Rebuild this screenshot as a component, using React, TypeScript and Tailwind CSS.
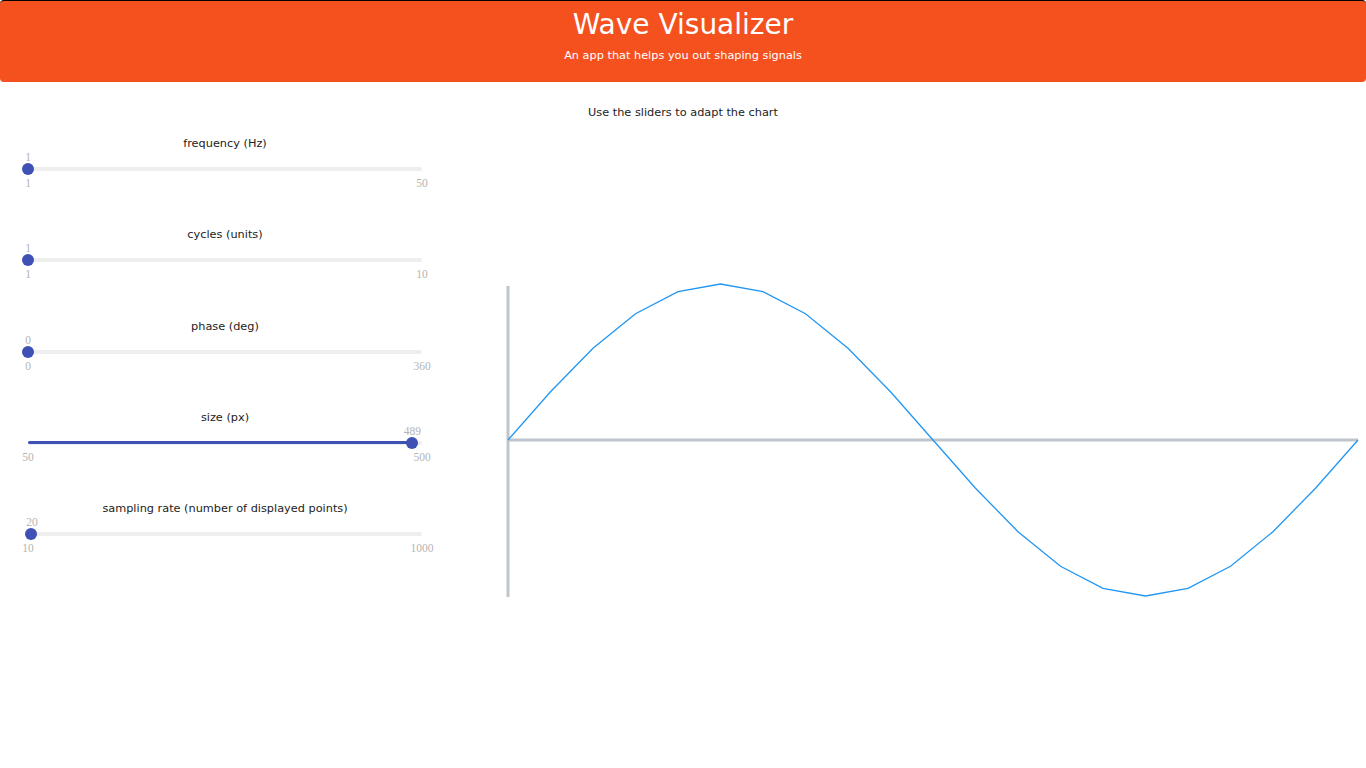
import React from "react";

type SliderProps = {
  label: string;
  value: number;
  min: number;
  max: number;
  filled?: boolean;
};

const TRACK = 394;

function Slider({ label, value, min, max, filled }: SliderProps) {
  const pos = ((value - min) / (max - min)) * TRACK;
  return (
    <div className="w-[394px]">
      <div className="text-center text-[11.3px] leading-[14px] text-[#222]">{label}</div>
      <div className="relative h-[12px]">
        <span
          className="absolute top-0 -translate-x-1/2 text-[11.5px] leading-[12px] text-[#b4b4b4] [font-family:'Liberation_Serif',serif]"
          style={{ left: pos }}
        >
          {value}
        </span>
      </div>
      <div className="relative h-[12px]">
        <div className="absolute left-0 right-0 top-[4px] h-[4px] rounded-full bg-[#eeeeee]" />
        {filled && (
          <div
            className="absolute left-0 top-[4.5px] h-[3px] rounded-full bg-[#3f51b5]"
            style={{ width: pos }}
          />
        )}
        <div
          className="absolute top-0 h-[12px] w-[12px] -translate-x-1/2 rounded-full bg-[#3f51b5]"
          style={{ left: pos - 0.5 }}
        />
      </div>
      <div className="relative mt-[2px] h-[12px] text-[11.5px] leading-[12px] text-[#b4b4b4] [font-family:'Liberation_Serif',serif]">
        <span className="absolute left-0 top-0 -translate-x-1/2">{min}</span>
        <span className="absolute top-0 right-0 translate-x-1/2">{max}</span>
      </div>
    </div>
  );
}

function Chart() {
  const n = 20;
  const pts: string[] = [];
  for (let i = 0; i <= n; i++) {
    const x = 2 + 42.5 * i;
    const y = 156 - 156 * Math.sin((2 * Math.PI * i) / n);
    pts.push(`${x.toFixed(2)},${y.toFixed(2)}`);
  }
  return (
    <svg width="860" height="320" className="mt-[164px] overflow-visible">
      <line x1="2" y1="2" x2="2" y2="313" stroke="#bfc5ca" strokeWidth="3" />
      <line x1="2" y1="156" x2="852" y2="156" stroke="#bfc5ca" strokeWidth="3" />
      <polyline points={pts.join(" ")} fill="none" stroke="#2196f3" strokeWidth="1.3" />
    </svg>
  );
}

export default function App() {
  return (
    <div className="min-h-screen bg-white [font-family:'DejaVu_Sans',sans-serif]">
      <header className="flex h-[82px] flex-col items-center rounded-[4px] border-t border-black bg-[#f5511f] text-white">
        <h1 className="mt-[7px] text-[28px] leading-[34px]">Wave Visualizer</h1>
        <p className="mt-[7px] text-[11.3px] leading-[14px]">An app that helps you out shaping signals</p>
      </header>
      <p className="mt-[24px] text-center text-[11.3px] leading-[14px] text-[#222]">
        Use the sliders to adapt the chart
      </p>
      <div className="flex">
        <div className="flex w-[506px] flex-col gap-[39.3px] pl-[28px] pt-[17px]">
          <Slider label="frequency (Hz)" value={1} min={1} max={50} />
          <Slider label="cycles (units)" value={1} min={1} max={10} />
          <Slider label="phase (deg)" value={0} min={0} max={360} />
          <Slider label="size (px)" value={489} min={50} max={500} filled />
          <Slider label="sampling rate (number of displayed points)" value={20} min={10} max={1000} />
        </div>
        <Chart />
      </div>
    </div>
  );
}
